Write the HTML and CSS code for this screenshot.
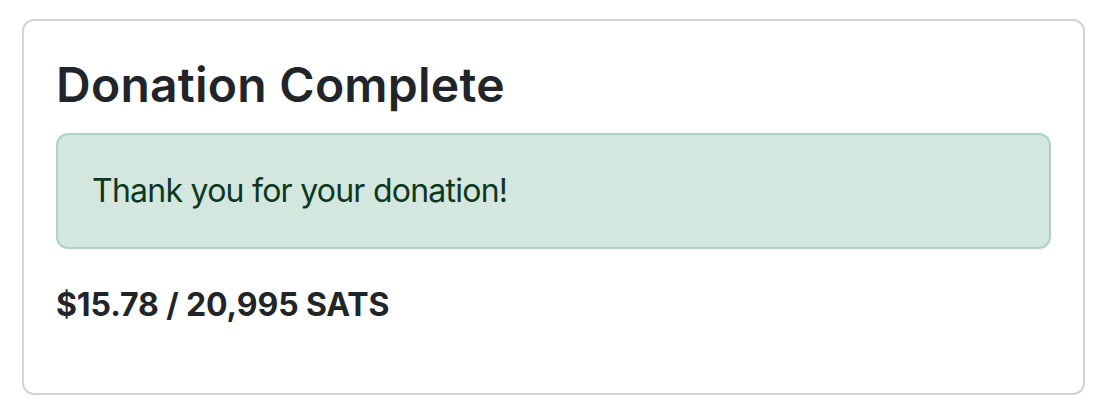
FILE: index.html
```html
<!DOCTYPE html>
<html lang="en">
<head>
<meta charset="utf-8">
<title>Donation Complete</title>
<link rel="stylesheet" href="styles.css">
</head>
<body>
<main class="page">
  <section class="card">
    <h1 class="card-title">Donation Complete</h1>
    <div class="alert">Thank you for your donation!</div>
    <p class="amount">$15.78 / 20,995 SATS</p>
  </section>
</main>
</body>
</html>
```

FILE: styles.css
```css
* { box-sizing: border-box; }
html, body { margin: 0; padding: 0; background: #fff; }
body {
  font-family: Inter, "Noto Sans", "Liberation Sans", sans-serif;
  color: #212529;
  font-size: 32px;
  line-height: 1.5;
}
.page {
  padding: 19px 23px 0 22px;
}
.card {
  border: 2px solid #d3d3d5;
  border-radius: 12px;
  padding: 32px;
}
.card-title {
  margin: 3px 0 19px;
  font-size: 48px;
  font-weight: 560;
  line-height: 1.2;
  letter-spacing: 0.25px;
}
.alert {
  background: #d3e7de;
  border: 2px solid #aed3c1;
  border-radius: 12px;
  color: #0c3823;
  padding: 32px 34px;
  margin-bottom: 32px;
  letter-spacing: -0.75px;
}
.amount {
  margin: 0 0 32px;
  font-weight: 700;
  letter-spacing: -0.1px;
}
```
